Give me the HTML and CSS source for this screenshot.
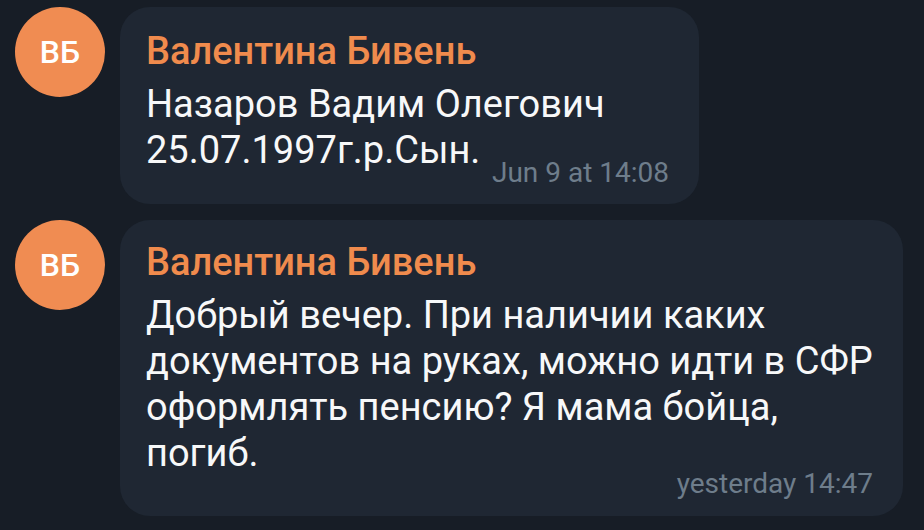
FILE: index.html
```html
<!DOCTYPE html>
<html lang="ru">
<head>
<meta charset="utf-8">
<title>Chat</title>
<link rel="stylesheet" href="styles.css">
</head>
<body>
<div class="chat">
  <div class="row">
    <div class="avatar">ВБ</div>
    <div class="bubble bubble--first">
      <div class="name">Валентина Бивень</div>
      <div class="text">Назаров Вадим Олегович<br>25.07.1997г.р.Сын.</div>
      <div class="meta meta--inline">Jun 9 at 14:08</div>
    </div>
  </div>
  <div class="row">
    <div class="avatar">ВБ</div>
    <div class="bubble bubble--second">
      <div class="name">Валентина Бивень</div>
      <div class="text">Добрый вечер. При наличии каких<br>документов на руках, можно идти в СФР<br>оформлять пенсию? Я мама бойца,<br>погиб.</div>
      <div class="meta meta--below">yesterday 14:47</div>
    </div>
  </div>
</div>
</body>
</html>
```
FILE: styles.css
```css
html, body {
  margin: 0;
  padding: 0;
  background: #171d26;
}
body {
  font-family: Roboto, "Noto Sans", sans-serif;
  width: 924px;
  height: 530px;
  overflow: hidden;
}
.chat {
  display: flex;
  flex-direction: column;
  gap: 16px;
  padding: 7px 0 0 15px;
}
.row {
  display: flex;
  align-items: flex-start;
  gap: 15px;
}
.avatar {
  flex: none;
  width: 90px;
  height: 90px;
  border-radius: 50%;
  background: #f08c52;
  color: #ffffff;
  font-size: 32px;
  font-weight: 500;
  display: flex;
  align-items: center;
  justify-content: center;
}
.bubble {
  box-sizing: border-box;
  background: #1f2733;
  border-radius: 30px;
  padding: 22px 30px 0 26px;
}
.bubble--first {
  width: 579px;
  height: 197px;
}
.bubble--second {
  width: 783px;
  height: 296px;
  padding-top: 20px;
}
.name {
  color: #f08b4d;
  font-size: 38px;
  font-weight: 500;
  line-height: 44px;
  margin-bottom: 8px;
}
.text {
  color: #f7f8f9;
  font-size: 38px;
  line-height: 46px;
  white-space: nowrap;
}
.meta {
  color: #6e7d8b;
  font-size: 28px;
  line-height: 30px;
  text-align: right;
}
.meta--inline {
  margin-top: -15px;
}
.meta--below {
  margin-top: -7px;
}
```
